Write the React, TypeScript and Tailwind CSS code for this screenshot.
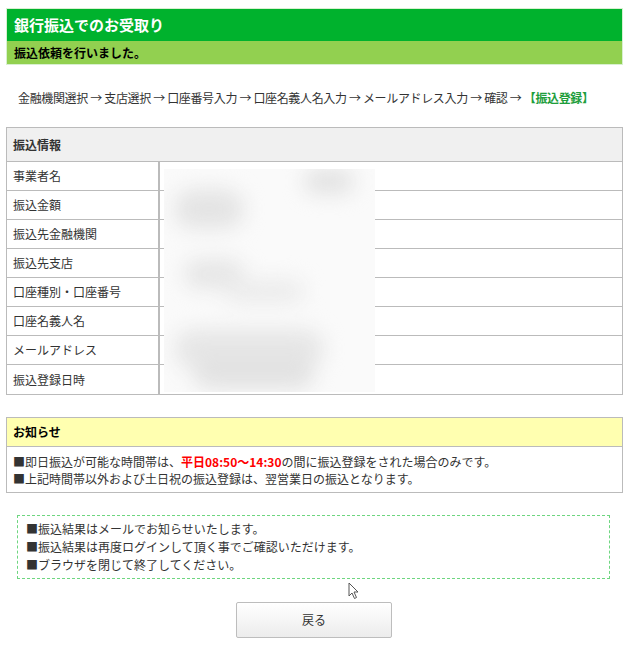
import React from 'react';

const rows = [
  '事業者名',
  '振込金額',
  '振込先金融機関',
  '振込先支店',
  '口座種別・口座番号',
  '口座名義人名',
  'メールアドレス',
  '振込登録日時',
];

const steps = ['金融機関選択', '支店選択', '口座番号入力', '口座名義人名入力', 'メールアドレス入力', '確認'];

const App = () => {
  return (
    <div
      className="w-[629px] min-h-[651px] bg-white text-[12px] text-[#333] pt-[8px]"
      style={{ fontFamily: '"Noto Sans CJK JP", "Noto Sans", sans-serif' }}
    >
      <div className="mx-[6px] border border-[#d8f0d0]">
        <div className="bg-[#00b22d] h-[32px] flex items-center px-[7px] text-white text-[15px] font-bold">
          銀行振込でのお受取り
        </div>
        <div className="bg-[#92d050] h-[23px] flex items-center px-[7px] text-[12px] font-bold text-black">
          振込依頼を行いました。
        </div>
      </div>

      <div className="mt-[24px] pl-[18px] text-[12px] text-[#333] leading-[18px] tracking-[-0.35px] flex whitespace-pre">
        {steps.map((s) => (
          <span key={s}>{`${s} → `}</span>
        ))}
        <span className="text-[#1e9e3c] font-bold">【振込登録】</span>
      </div>

      <div className="relative mx-[6px] mt-[20px] border border-[#bbbbbb]">
        <div className="bg-[#f0f0f0] h-[34px] flex items-center px-[6px] font-bold text-[12px] border-b border-[#bbbbbb]">
          振込情報
        </div>
        {rows.map((r, i) => (
          <div
            key={r}
            className={`flex h-[29px] ${i < rows.length - 1 ? 'border-b border-[#bbbbbb]' : ''}`}
          >
            <div className="w-[153px] border-r-2 border-[#bbbbbb] flex items-center px-[6px]">{r}</div>
            <div className="flex-1" />
          </div>
        ))}
        <div className="absolute left-[157px] top-[41px] w-[211px] h-[223px] bg-[#fafafa] overflow-hidden">
          <div className="absolute inset-0 blur-[10px]">
            <div className="absolute left-[10px] top-[20px] w-[70px] h-[40px] rounded-full bg-[#e4e4e4]" />
            <div className="absolute left-[140px] top-[0px] w-[50px] h-[25px] rounded-full bg-[#e2e2e2]" />
            <div className="absolute left-[20px] top-[90px] w-[60px] h-[30px] rounded-full bg-[#e6e6e6]" />
            <div className="absolute left-[60px] top-[110px] w-[80px] h-[25px] rounded-full bg-[#ececec]" />
            <div className="absolute left-[10px] top-[160px] w-[150px] h-[40px] rounded-full bg-[#e6e6e6]" />
            <div className="absolute left-[30px] top-[190px] w-[120px] h-[30px] rounded-full bg-[#e2e2e2]" />
          </div>
        </div>
      </div>

      <div className="mx-[6px] mt-[22px] border border-[#bbbbbb]">
        <div className="bg-[#ffffb0] h-[29px] flex items-center px-[6px] font-bold text-black border-b border-[#bbbbbb]">
          お知らせ
        </div>
        <div className="px-[6px] pt-[6px] pb-[5px] flex flex-col">
          <div className="h-[17px] leading-[17px]">
            ■即日振込が可能な時間帯は、
            <span className="text-[#ff0000] font-bold">平日08:50～14:30</span>
            の間に振込登録をされた場合のみです。
          </div>
          <div className="h-[17px] leading-[17px]">■上記時間帯以外および土日祝の振込登録は、翌営業日の振込となります。</div>
        </div>
      </div>

      <div className="mx-[17px] mt-[22px] w-[593px] border border-dashed border-[#6ed680] px-[8px] py-[4px] flex flex-col">
        <div className="h-[18px] leading-[18px]">■振込結果はメールでお知らせいたします。</div>
        <div className="h-[18px] leading-[18px]">■振込結果は再度ログインして頂く事でご確認いただけます。</div>
        <div className="h-[18px] leading-[18px]">■ブラウザを閉じて終了してください。</div>
      </div>

      <div className="relative flex justify-center mt-[23px]">
        <button className="w-[156px] h-[36px] border border-[#bdbdbd] rounded-[2px] bg-gradient-to-b from-[#ffffff] to-[#ececec] text-[12px] text-[#333] ml-[-1px]">
          戻る
        </button>
        <svg className="absolute left-[348px] top-[-20px]" width="12" height="18" viewBox="0 0 12 18">
          <path d="M1 1 L1 14 L4 11 L6.5 16.5 L8.5 15.5 L6 10 L10 10 Z" fill="#fff" stroke="#555" strokeWidth="1" />
        </svg>
      </div>
    </div>
  );
};

export default App;
